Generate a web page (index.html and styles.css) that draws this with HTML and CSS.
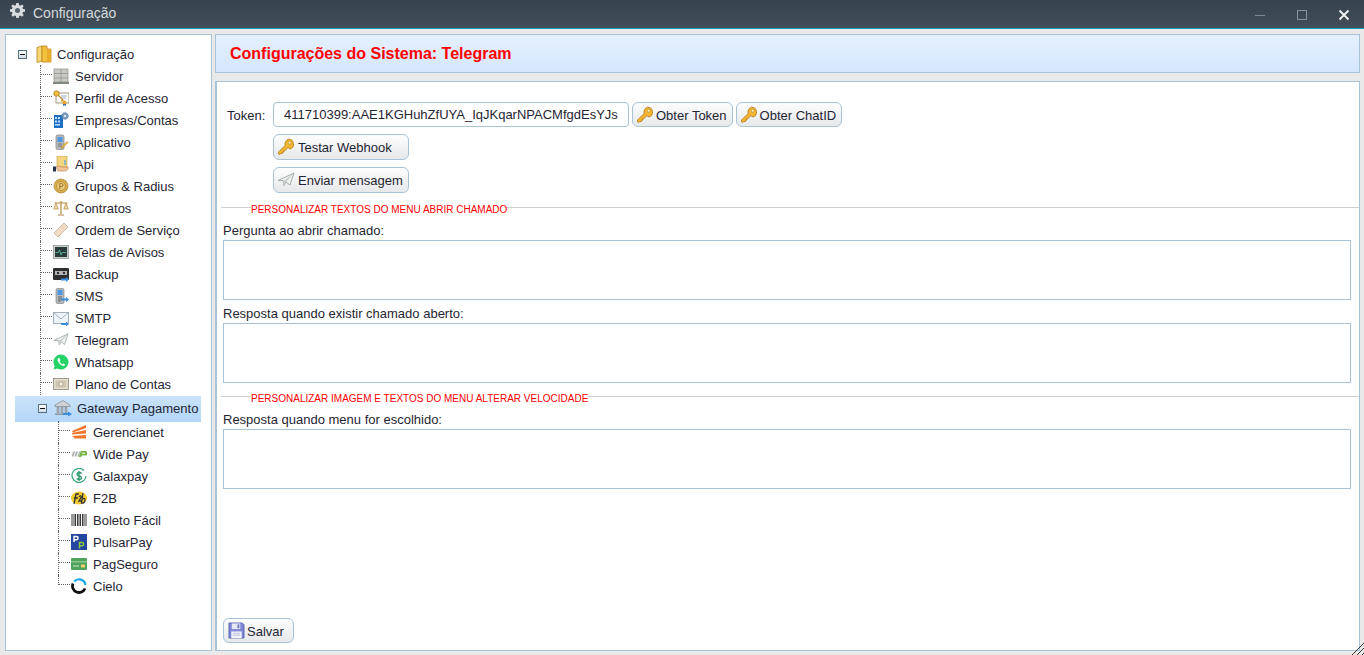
FILE: index.html
```html
<!DOCTYPE html>
<html lang="pt">
<head>
<meta charset="utf-8">
<title>Configuração</title>
<link rel="stylesheet" href="styles.css">
</head>
<body>
<svg class="sprite" aria-hidden="true">
  <symbol id="key" viewBox="0 0 18 18">
    <path d="M11.5 1.2a5 5 0 0 1 1.4 9.8L11 9.5 7.6 12.9l-1 .1v1.2l-1.2.1v1.2l-1.6.1-1.6 1 -.8-.8.2-1.8 6.6-6.6A5 5 0 0 1 11.5 1.2z" fill="#f2b632" stroke="#b57d14" stroke-width=".9"/>
    <path d="M12.7 3.2a1.5 1.5 0 1 1-.1 3 1.5 1.5 0 0 1 .1-3z" fill="#fff3c0" stroke="#b57d14" stroke-width=".6"/>
  </symbol>
  <symbol id="plane" viewBox="0 0 18 18">
    <path d="M1 9.5 17 2l-4 12-4-3-2 3.6-.8-5z" fill="#eef0ee" stroke="#9aa8a4" stroke-width=".9" stroke-linejoin="round"/>
    <path d="M6.2 10.6 17 2 9 11l-2 3.6z" fill="#c5cdc9"/>
  </symbol>
</svg>

<header class="titlebar">
  <svg class="gear" viewBox="0 0 16 16" width="15" height="15"><path d="M6.700 0h2.600l.4 2.200 1.300.6L12.800 1.500l1.800 1.800-1.300 1.800.6 1.300 2.100.3v2.600l-2.100.4-.6 1.300 1.300 1.800-1.800 1.800-1.800-1.300-1.300.6-.4 2.100H6.700l-.4-2.100-1.300-.6-1.800 1.300-1.800-1.800 1.300-1.800-.6-1.300L0 9.300V6.700l2.100-.3.6-1.300L1.400 3.300l1.800-1.800L5 2.800l1.300-.6z" fill="#d9dcdf"/><circle cx="8" cy="8" r="2.700" fill="#57636d"/></svg>
  <span class="titlebar-text">Configuração</span>
  <div class="window-controls">
    <svg width="12" height="12" viewBox="0 0 12 12"><path d="M1 6.500h10" stroke="#7f8a93" stroke-width="1"/></svg>
    <svg width="12" height="12" viewBox="0 0 12 12"><rect x="1.500" y="1.500" width="9" height="9" fill="none" stroke="#87929a" stroke-width="1"/></svg>
    <svg width="12" height="12" viewBox="0 0 12 12"><path d="M1.500 1.500l9 9M10.500 1.500l-9 9" stroke="#f2f4f5" stroke-width="1.800"/></svg>
  </div>
</header>

<div class="workspace">
  <aside class="tree-panel">
    <div class="tree-root">
      <span class="expander"></span>
      <svg class="icon" viewBox="0 0 16 18" width="16" height="18"><path d="M1 2.500 6 1v15l-5 1.500z" fill="#f7d774" stroke="#b9851f" stroke-width=".8"/><path d="M6 1h5v3h4v13H6z" fill="#f2c23e" stroke="#b9851f" stroke-width=".8"/><path d="M11 4h4v13h-4z" fill="#e7ad2b"/></svg>
      <span>Configuração</span>
    </div>
    <ul class="level-one">
      <li class="tree-item"><svg class="icon" viewBox="0 0 16 16" width="16" height="16"><rect x="1" y="1" width="14" height="13" fill="#c9c9c4" stroke="#8e8e88" stroke-width=".7"/><path d="M8 1v13M1 5.500h14M1 10h14" stroke="#8e8e88" stroke-width=".7"/><rect x="0" y="14" width="16" height="2" fill="#7d8a7d"/></svg><span>Servidor</span></li>
      <li class="tree-item"><svg class="icon" viewBox="0 0 16 16" width="16" height="16"><rect x="3" y="3" width="13" height="10" fill="#fff" stroke="#9a8d72" stroke-width=".9"/><path d="M8 6h6M8 8h5" stroke="#7f9cc4" stroke-width=".8"/><circle cx="3.500" cy="3.500" r="2.700" fill="#f2c23e" stroke="#a8761a" stroke-width=".8"/><path d="M5 5l5 5-1 1-1-.5" stroke="#c48f24" stroke-width="1.200" fill="none"/><circle cx="11.500" cy="12.500" r="2" fill="#e9a32b"/><path d="M10 14h3v2l-1.500-.8L10 16z" fill="#3c6fb8"/></svg><span>Perfil de Acesso</span></li>
      <li class="tree-item"><svg class="icon" viewBox="0 0 16 16" width="16" height="16"><path d="M1 3h9v13H1z" fill="#1f6fc4"/><path d="M2 5h2v2H2zm3 0h2v2H5zM2 8.500h2v2H2zm3 0h2v2H5zM2 12h5v1.500H2z" fill="#bfe0ff"/><circle cx="12" cy="4" r="3.200" fill="#7f9fc0" stroke="#53799f" stroke-width="1" stroke-dasharray="1.200 .6"/><circle cx="12" cy="4" r="1" fill="#fff"/></svg><span>Empresas/Contas</span></li>
      <li class="tree-item"><svg class="icon" viewBox="0 0 16 16" width="16" height="16"><rect x="3" y="1" width="8" height="14.500" rx="1.500" fill="#b5b9bb" stroke="#7f8588" stroke-width=".7"/><rect x="4.500" y="3" width="5" height="5" fill="#4d98df"/><path d="M5 10h4M5 12h4" stroke="#6c7275" stroke-width="1"/><path d="M15 8.500 9.500 14l-1.300.4.300-1.400L14 7.500z" fill="#f0c339" stroke="#a1741a" stroke-width=".5"/></svg><span>Aplicativo</span></li>
      <li class="tree-item"><svg class="icon" viewBox="0 0 16 16" width="16" height="16"><path d="M4 0h10v11H4z" fill="#f5d680" stroke="#c79a38" stroke-width=".6"/><path d="M12 4v5" stroke="#6fa8d6" stroke-width="1.400"/><path d="M3 11c2-1.500 4-1 5 0l7 0c1 1.500-1 4-3 4H5z" fill="#f3c49a" stroke="#b77f4c" stroke-width=".6"/><rect x="0" y="10.500" width="3" height="5" fill="#26344f"/></svg><span>Api</span></li>
      <li class="tree-item"><svg class="icon" viewBox="0 0 16 16" width="16" height="16"><circle cx="8" cy="8" r="7" fill="#d9ac4a" stroke="#a88032" stroke-width=".7"/><circle cx="8" cy="8" r="4.500" fill="#e8c777" stroke="#ad8536" stroke-width=".7"/><path d="M6.800 11V5.500h1.700a1.500 1.500 0 0 1 0 3H6.800" fill="none" stroke="#94702a" stroke-width=".9"/></svg><span>Grupos &amp; Radius</span></li>
      <li class="tree-item"><svg class="icon" viewBox="0 0 16 16" width="16" height="16"><path d="M8 1v13M1.500 3h13M5 15h6" stroke="#b58a3f" stroke-width="1.200"/><path d="M3 3 .8 9h4.400zM13 3l-2.200 6h4.400z" fill="#f0dcae" stroke="#b58a3f" stroke-width=".7"/></svg><span>Contratos</span></li>
      <li class="tree-item"><svg class="icon" viewBox="0 0 16 16" width="16" height="16"><path d="M11 1l4 4L5 15 1 11z" fill="#f3dcc6" stroke="#c7b09a" stroke-width=".8"/><path d="M8.500 4.500l3 3" stroke="#c7b09a" stroke-width=".7" stroke-dasharray="1 1"/></svg><span>Ordem de Serviço</span></li>
      <li class="tree-item"><svg class="icon" viewBox="0 0 16 16" width="16" height="16"><rect x=".5" y="1.500" width="15" height="13" fill="#c9cdcc" stroke="#8b908f" stroke-width=".7"/><rect x="2" y="3" width="12" height="10" fill="#2d3a3c"/><path d="M2.500 8.500h3l1-2.500 1.500 5 1-2.500h4" stroke="#57c7a3" stroke-width=".8" fill="none"/></svg><span>Telas de Avisos</span></li>
      <li class="tree-item"><svg class="icon" viewBox="0 0 16 16" width="16" height="16"><rect y="2" width="16" height="12" rx="1" fill="#2f2f31"/><rect x="2" y="5" width="12" height="4" fill="#b7b7b7"/><circle cx="5" cy="7" r="1.200" fill="#2f2f31"/><circle cx="11" cy="7" r="1.200" fill="#2f2f31"/><path d="M8 12.500h5V11l3 2.500-3 2.500v-1.500H8z" fill="#3b8ede"/></svg><span>Backup</span></li>
      <li class="tree-item"><svg class="icon" viewBox="0 0 16 16" width="16" height="16"><rect x="3" y=".5" width="8" height="15" rx="1.500" fill="#b6babc" stroke="#80868a" stroke-width=".7"/><rect x="4.500" y="2" width="5" height="5" fill="#4d98df"/><path d="M5 9h4M5 11h4M5 13h3" stroke="#5e6468" stroke-width="1"/><path d="M8 10.500h5V9l3 2.500-3 2.500v-1.500H8z" fill="#3b8ede"/></svg><span>SMS</span></li>
      <li class="tree-item"><svg class="icon" viewBox="0 0 16 16" width="16" height="16"><rect x=".5" y="2.500" width="15" height="11" fill="#eef3f8" stroke="#8fa0b0" stroke-width=".8"/><path d="M.5 2.500 8 9l7.500-6.500" fill="none" stroke="#8fa0b0" stroke-width=".8"/><path d="M8 13h5v-1.500l3 2.500-3 2.500V15H8z" fill="#3b8ede"/></svg><span>SMTP</span></li>
      <li class="tree-item"><svg class="icon" viewBox="0 0 18 18" width="16" height="16"><use href="#plane"/></svg><span>Telegram</span></li>
      <li class="tree-item"><svg class="icon" viewBox="0 0 16 16" width="16" height="16"><path d="M8 .5a7.500 7.500 0 0 0-6.400 11.400L.5 15.500l3.700-1A7.500 7.500 0 1 0 8 .5z" fill="#25d366"/><path d="M5.500 4c-1 .6-1.300 1.800-.6 3.300 1 2.200 2.700 3.800 4.700 4.500 1.300.4 2.300-.2 2.600-1.200l-1.800-1.200-1 .9c-1.200-.5-2.300-1.600-2.800-2.800l.8-1L6.400 4z" fill="#fff"/></svg><span>Whatsapp</span></li>
      <li class="tree-item"><svg class="icon" viewBox="0 0 16 16" width="16" height="16"><rect x=".5" y="2.500" width="15" height="11" fill="#e3ddcf" stroke="#8d8778" stroke-width=".8"/><rect x="2.500" y="4.500" width="11" height="7" fill="#cfc6b0"/><circle cx="8" cy="8" r="2" fill="#f3efe3" stroke="#8d8778" stroke-width=".5"/></svg><span>Plano de Contas</span></li>
    </ul>
    <div class="tree-selected">
      <span class="expander"></span>
      <svg class="icon" viewBox="0 0 18 18" width="18" height="18"><path d="M9 1.500 1 6v1.500h15V6z" fill="#cfd3d6" stroke="#7e868c" stroke-width=".7"/><path d="M3 8h2v6H3zm4 0h2v6H7zm4 0h2v6h-2z" fill="#a9afb4" stroke="#7e868c" stroke-width=".5"/><path d="M1 14.500h13V16H1z" fill="#8e969c"/><path d="M9 14h5v-1.500l4 2.500-4 2.500V16H9z" fill="#3b8ede"/></svg>
      <span>Gateway Pagamento</span>
    </div>
    <ul class="level-two">
      <li class="tree-item"><svg class="icon" viewBox="0 0 16 16" width="16" height="16"><path d="M15 1 1 7l1 1.500L15 4zM15 6 1 9v1.500l14-1zM1 12l14-1v3.500H4z" fill="#f0762c"/></svg><span>Gerencianet</span></li>
      <li class="tree-item"><svg class="icon" viewBox="0 0 16 16" width="16" height="16"><path d="M2 5.500h2.200L2.500 10.500H.5zM5 5.500h2L5.300 10.500H3.300zM8 5.500h1.500L7.800 10.500H6.200z" fill="#b4b6b4"/><path d="M9.800 5h4.200a2.300 2.300 0 0 1 0 4.600h-3.200l-.5 1.400H7.800z" fill="#74b545"/><path d="M11 7.200h3" stroke="#fff" stroke-width="1"/></svg><span>Wide Pay</span></li>
      <li class="tree-item"><svg class="icon" viewBox="0 0 16 16" width="16" height="16"><path d="M13 2.500A7 7 0 1 0 15 8" fill="none" stroke="#3bab7f" stroke-width="1.300"/><path d="M10.500 5.500C9.500 4 6 4 6 6.200 6 8.500 10.500 7.500 10.500 10 10.500 12 7 12 5.800 10.500M8 3v10" fill="none" stroke="#2c9b6e" stroke-width="1.400"/></svg><span>Galaxpay</span></li>
      <li class="tree-item"><svg class="icon" viewBox="0 0 16 16" width="16" height="16"><ellipse cx="8" cy="8" rx="8" ry="6.500" fill="#f2c92c"/><path d="M3 14 5 4h3M3 8h4M8 7c1-2 3-1 2 .5L8 11h3M12 3l-1.500 10c2 .5 3.500-1 3.500-3s-1.500-2-2.500-1" fill="none" stroke="#333" stroke-width="1.300"/></svg><span>F2B</span></li>
      <li class="tree-item"><svg class="icon" viewBox="0 0 16 16" width="16" height="16"><path d="M1 2v12M3 2v12M4.500 2v12M6.500 2v12M8 2v12M9.500 2v12M11.500 2v12M13 2v12M15 2v12" stroke="#222" stroke-width=".9"/></svg><span>Boleto Fácil</span></li>
      <li class="tree-item"><svg class="icon" viewBox="0 0 16 16" width="16" height="16"><rect width="16" height="16" fill="#23479e"/><path d="M3 8V2.500h2.500a1.500 1.500 0 0 1 0 3.200H3" fill="none" stroke="#fff" stroke-width="1.400"/><path d="M8.500 14.500V8.500H11a1.600 1.600 0 0 1 0 3.300H8.500" fill="none" stroke="#8ecb3c" stroke-width="1.400"/></svg><span>PulsarPay</span></li>
      <li class="tree-item"><svg class="icon" viewBox="0 0 16 16" width="16" height="16"><rect y="2" width="16" height="12" rx="1" fill="#4fa35a"/><rect y="5" width="16" height="1.500" fill="#8ac78d"/><path d="M2 10h6" stroke="#d5ecd6" stroke-width="1"/><rect x="10" y="8.500" width="4" height="3" fill="#f0cf6a"/></svg><span>PagSeguro</span></li>
      <li class="tree-item"><svg class="icon" viewBox="0 0 16 16" width="16" height="16"><path d="M3.200 3.500A6.500 6.500 0 0 1 14.500 7" fill="none" stroke="#1ba8e8" stroke-width="2.200"/><path d="M14 10.500A6.500 6.500 0 0 1 2 5.500" fill="none" stroke="#111" stroke-width="2.800"/></svg><span>Cielo</span></li>
    </ul>
  </aside>

  <main class="content">
    <h1 class="page-heading">Configurações do Sistema: Telegram</h1>
    <section class="form-panel">
      <div class="token-row">
        <label class="token-label" for="token">Token:</label>
        <input class="text-input" id="token" type="text" value="411710399:AAE1KGHuhZfUYA_IqJKqarNPACMfgdEsYJs">
        <button class="btn btn-inline" type="button"><svg class="btn-icon"><use href="#key"/></svg><span class="btn-label">Obter Token</span></button>
        <button class="btn btn-inline" type="button"><svg class="btn-icon"><use href="#key"/></svg><span class="btn-label">Obter ChatID</span></button>
      </div>
      <div class="stacked-actions">
        <button class="btn btn-wide" type="button"><svg class="btn-icon"><use href="#key"/></svg>Testar Webhook</button>
        <button class="btn btn-wide" type="button"><svg class="btn-icon"><use href="#plane"/></svg>Enviar mensagem</button>
      </div>
      <div class="divider divider-first"><span>PERSONALIZAR TEXTOS DO MENU ABRIR CHAMADO</span></div>
      <div class="field">
        <label>Pergunta ao abrir chamado:</label>
        <textarea class="text-area"></textarea>
      </div>
      <div class="field">
        <label>Resposta quando existir chamado aberto:</label>
        <textarea class="text-area"></textarea>
      </div>
      <div class="divider"><span>PERSONALIZAR IMAGEM E TEXTOS DO MENU ALTERAR VELOCIDADE</span></div>
      <div class="field">
        <label>Resposta quando menu for escolhido:</label>
        <textarea class="text-area"></textarea>
      </div>
      <button class="btn btn-save" type="button"><svg class="save-icon" viewBox="0 0 18 18"><path d="M1 1h14l2 2v14H1z" fill="#7f87d6" stroke="#4d55a6" stroke-width=".8"/><rect x="4" y="1.500" width="9" height="6" fill="#e6e8f6"/><rect x="10" y="2.500" width="2" height="4" fill="#6a72c2"/><rect x="3.500" y="10" width="11" height="7" fill="#f4f4fb"/><path d="M5 12h8M5 14h8" stroke="#a9aedb" stroke-width=".8"/></svg><span class="btn-label">Salvar</span></button>
    </section>
  </main>
</div>
<svg class="resize-grip" viewBox="0 0 12 12" width="12" height="12"><path d="M0 12 12 0M5 12l7-7M10 12l2-2" stroke="#333" stroke-width="1"/></svg>
</body>
</html>
```
FILE: styles.css
```css
* { box-sizing: border-box; }
html, body { height: 100%; }
body {
  margin: 0;
  height: 655px;
  overflow: hidden;
  display: flex;
  flex-direction: column;
  background: #e9e9e9;
  font-family: "Liberation Sans", Arial, sans-serif;
  font-size: 13px;
  color: #1f2533;
}
.sprite { display: none; }

.titlebar {
  flex: none;
  height: 29px;
  display: flex;
  align-items: center;
  padding: 0 14px 3px 10px;
  background: linear-gradient(#37434e, #414e59);
  border-bottom: 1px solid #12a0b8;
  color: #d5dadd;
}
.gear { margin-top: -4px; }
.titlebar-text { margin-left: 8px; font-size: 14px; }
.window-controls { margin-left: auto; display: flex; gap: 30px; margin-top: 5px; }

.workspace {
  flex: 1;
  min-height: 0;
  display: flex;
  gap: 3px;
  padding: 5px 4px 4px 5px;
}

.tree-panel {
  flex: none;
  width: 207px;
  padding-top: 8px;
  background: #fff;
  border: 1px solid #a8c3d8;
  overflow: hidden;
}
.tree-root, .tree-item, .tree-selected {
  display: flex;
  align-items: center;
}
.tree-root { height: 22px; padding-left: 12px; gap: 5px; }
.tree-root .expander { margin-right: 4px; }
.expander {
  position: relative;
  flex: none;
  width: 9px;
  height: 9px;
  background: linear-gradient(#fff, #d4dde6);
  border: 1px solid #56707f;
}
.expander::after {
  content: "";
  position: absolute;
  left: 1px;
  right: 1px;
  top: 3px;
  height: 1px;
  background: #111;
}
.level-one, .level-two { list-style: none; margin: 0; padding: 0; }
.tree-item { position: relative; height: 22px; gap: 6px; }
.level-one .tree-item { padding-left: 47px; }
.level-two .tree-item { padding-left: 65px; }
.tree-item::before, .tree-item::after {
  content: "";
  position: absolute;
}
.tree-item::before {
  top: 0;
  bottom: 0;
  border-left: 1px dotted #666;
}
.tree-item::after {
  top: 9px;
  height: 0;
  width: 12px;
  border-top: 1px dotted #666;
}
.level-one .tree-item::before, .level-one .tree-item::after { left: 34px; }
.level-two .tree-item::before, .level-two .tree-item::after { left: 52px; }
.level-two .tree-item:last-child::before { bottom: 12px; }
.tree-selected {
  margin: 1px 10px -1px 9px;
  height: 26px;
  padding: 0 0 2px 23px;
  gap: 5px;
  background: linear-gradient(#cbe3fb, #b3d6f9);
  white-space: nowrap;
}
.tree-selected .expander { margin-right: 2px; }
.icon { flex: none; }

.content {
  flex: 1;
  min-width: 0;
  display: flex;
  flex-direction: column;
  gap: 8px;
}
.page-heading {
  flex: none;
  margin: 0;
  height: 39px;
  padding: 1px 14px 0;
  display: flex;
  align-items: center;
  font-size: 16px;
  font-weight: bold;
  color: #f00;
  background: linear-gradient(#e4f0fe, #d5e7fd);
  border: 1px solid #a8c3d8;
}
.form-panel {
  flex: 1;
  min-height: 0;
  display: flex;
  flex-direction: column;
  padding: 20px 8px 7px 4px;
  background: #fff;
  border: 1px solid #a8c3d8;
  border-left-width: 2px;
}
.token-row { display: flex; align-items: center; height: 25px; padding-left: 6px; gap: 3px; }
.token-label { width: 43px; padding-top: 1px; }
.text-input {
  width: 356px;
  height: 25px;
  padding: 0 10px;
  font: inherit;
  color: inherit;
  background: #fff;
  border: 1px solid #a8c3d8;
  border-radius: 4px;
}
.btn {
  display: inline-flex;
  align-items: center;
  height: 25px;
  padding: 0 5px 0 3px;
  font: inherit;
  color: inherit;
  white-space: nowrap;
  background: linear-gradient(#fdfdfd, #e6e8ea);
  border: 1px solid #a8c3d8;
  border-radius: 6px;
}
.btn-label { padding-top: 2px; }
.btn-icon { width: 18px; height: 18px; margin-right: 2px; flex: none; }
.stacked-actions {
  display: flex;
  flex-direction: column;
  gap: 7px;
  margin: 7px 0 0 52px;
  align-items: flex-start;
}
.btn-wide { width: 136px; height: 26px; }
.btn-wide .btn-icon { margin-right: 3px; }
.divider {
  height: 1px;
  background: #cfcfcf;
  margin-right: -8px;
  display: flex;
  padding-left: 30px;
}
.divider span {
  height: 12px;
  line-height: 12px;
  margin-top: -3px;
  font-size: 10px;
  color: #f00;
  background: #fff;
  white-space: nowrap;
}
.divider-first { margin-top: 14px; }
.field { display: flex; flex-direction: column; padding-left: 2px; }
.field label { height: 16px; line-height: 16px; margin-top: 16px; }
.field + .field label { margin-top: 6px; margin-bottom: 1px; }
.divider + .field label { margin-top: 15px; margin-bottom: 1px; }
.text-area {
  display: block;
  width: 100%;
  height: 60px;
  resize: none;
  background: #fff;
  border: 1px solid #a8c3d8;
}
.field + .divider { margin-top: 13px; }
.btn-save {
  align-self: flex-start;
  margin: auto 0 0 2px;
  width: 71px;
  height: 25px;
  padding-left: 4px;
}
.save-icon { width: 17px; height: 17px; margin-right: 2px; flex: none; }
.resize-grip { position: absolute; right: 0; bottom: 0; }
```
